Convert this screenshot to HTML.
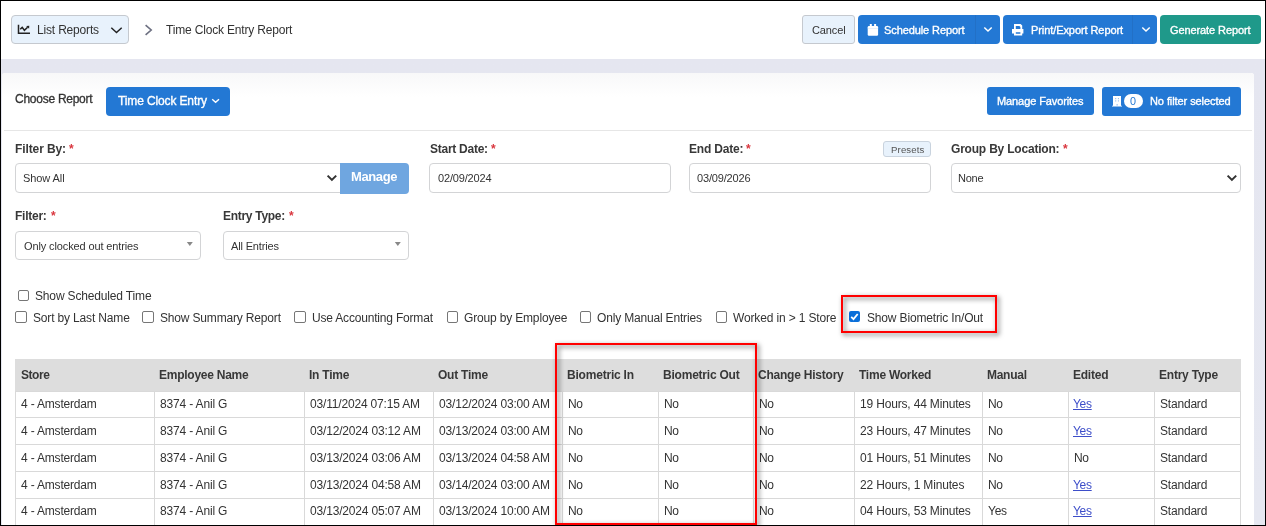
<!DOCTYPE html>
<html><head><meta charset="utf-8"><title>Time Clock Entry Report</title>
<style>
html,body{margin:0;padding:0;width:1266px;height:526px;overflow:hidden;background:#fff}
body{position:relative;font-family:"Liberation Sans",sans-serif}
.t{position:absolute;line-height:1;white-space:pre;font-family:"Liberation Sans",sans-serif;will-change:transform}
</style></head><body>
<div style="position:absolute;left:0px;top:0px;width:1266px;height:59px;background:#fff"></div>
<div style="position:absolute;left:0px;top:59px;width:1266px;height:467px;background:linear-gradient(#e5e6f0,#e6e8f1)"></div>
<div style="position:absolute;left:2px;top:73px;width:1252px;height:453px;background:#fff;border-radius:3px 3px 0 0"></div>
<div style="position:absolute;left:2px;top:73px;width:1252px;height:24px;background:linear-gradient(#f8f8f9,#fff);border-radius:3px 3px 0 0"></div>
<div style="position:absolute;left:4px;top:130px;width:1248px;height:1px;background:#e6e6e6"></div>
<div style="position:absolute;left:11px;top:15px;width:118px;height:29px;box-sizing:border-box;background:#e8f2fc;border:1px solid #c5c9cf;border-radius:4px"></div>
<svg style="position:absolute;left:17px;top:24px;" width="14" height="11" viewBox="0 0 14 11"><path d="M1.5 0.8 V9.3 H13" stroke="#222" stroke-width="1.5" fill="none"/><path d="M3.2 5.3 L5.2 3.4 L7.4 6.3 L10.6 3.2" stroke="#222" stroke-width="1.5" fill="none"/><path d="M9.2 1.9 L12.3 1.7 L12.1 4.8 Z" fill="#222"/></svg>
<div class="t" style="left:37.0px;top:23.64px;font-size:12px;color:#333;font-weight:400;letter-spacing:-0.176px;">List Reports</div>
<svg style="position:absolute;left:110px;top:26px;" width="13" height="8" viewBox="0 0 13 8"><path d="M1.3 1.8 L6.5 6.5 L11.7 1.8" stroke="#222" stroke-width="1.5" fill="none"/></svg>
<svg style="position:absolute;left:144px;top:24px;" width="9" height="12" viewBox="0 0 9 12"><path d="M1.6 1.2 L7.2 6 L1.6 10.8" stroke="#6c6f80" stroke-width="1.6" fill="none"/></svg>
<div class="t" style="left:166.2px;top:23.84px;font-size:12px;color:#333;font-weight:400;letter-spacing:-0.176px;">Time Clock Entry Report</div>
<div style="position:absolute;left:802px;top:15px;width:53px;height:29px;box-sizing:border-box;background:#e8f2fc;border:1px solid #c5c9cf;border-radius:3px"></div>
<div class="t" style="left:811.6px;top:24.69px;font-size:11px;color:#333;font-weight:400;letter-spacing:-0.130px;">Cancel</div>
<div style="position:absolute;left:858px;top:15px;width:142px;height:29px;background:#2378d4;border-radius:4px"></div>
<div style="position:absolute;left:975px;top:15px;width:1px;height:29px;background:#2270c6"></div>
<svg style="position:absolute;left:867px;top:23px;" width="12" height="13" viewBox="0 0 12 13"><rect x="0.7" y="3" width="10.4" height="9.8" rx="1.2" fill="#fff"/><rect x="2.8" y="1" width="2" height="3" fill="#fff"/><rect x="7.1" y="1" width="2" height="3" fill="#fff"/><rect x="0.7" y="5.2" width="10.4" height="0.5" fill="#cfe0f5"/></svg>
<div class="t" style="left:884.3000000000001px;top:24.69px;font-size:11px;color:#fff;font-weight:400;-webkit-text-stroke:0.35px #fff;letter-spacing:-0.097px;">Schedule Report</div>
<svg style="position:absolute;left:983px;top:26px;" width="10" height="7" viewBox="0 0 10 7"><path d="M1.3 1.5 L5 5 L8.7 1.5" stroke="#fff" stroke-width="1.5" fill="none"/></svg>
<div style="position:absolute;left:1003px;top:15px;width:154px;height:29px;background:#2378d4;border-radius:4px"></div>
<div style="position:absolute;left:1132px;top:15px;width:1px;height:29px;background:#2270c6"></div>
<svg style="position:absolute;left:1012px;top:24px;" width="12" height="12" viewBox="0 0 12 12"><path fill-rule="evenodd" fill="#fff" d="M2 0 H8.6 L10.2 1.6 V5 H11.4 V9.4 H10.2 V11.6 H2 V9.4 H0 V5 H2 Z M3.8 2 V4.9 H8.4 V3 L7.4 2 Z M3.8 8.2 V9.8 H8.4 V8.2 Z"/></svg>
<div class="t" style="left:1030.6px;top:24.69px;font-size:11px;color:#fff;font-weight:400;-webkit-text-stroke:0.35px #fff;letter-spacing:-0.080px;">Print/Export Report</div>
<svg style="position:absolute;left:1141px;top:26px;" width="10" height="7" viewBox="0 0 10 7"><path d="M1.3 1.5 L5 5 L8.7 1.5" stroke="#fff" stroke-width="1.5" fill="none"/></svg>
<div style="position:absolute;left:1160px;top:15px;width:101px;height:29px;background:#1f998a;border-radius:4px"></div>
<div class="t" style="left:1170.3px;top:24.69px;font-size:11px;color:#fff;font-weight:400;-webkit-text-stroke:0.35px #fff;letter-spacing:-0.096px;">Generate Report</div>
<div class="t" style="left:15.1px;top:93.24px;font-size:12px;color:#333;font-weight:400;-webkit-text-stroke:0.3px #333;letter-spacing:-0.260px;">Choose Report</div>
<div style="position:absolute;left:106px;top:87px;width:124px;height:29px;background:#2378d4;border-radius:4px"></div>
<div class="t" style="left:117.89999999999999px;top:94.84px;font-size:12px;color:#fff;font-weight:400;-webkit-text-stroke:0.35px #fff;letter-spacing:-0.127px;">Time Clock Entry</div>
<svg style="position:absolute;left:211px;top:98px;" width="10" height="6" viewBox="0 0 10 6"><path d="M1.2 1.2 L4.6 4.3 L8 1.2" stroke="#fff" stroke-width="1.4" fill="none"/></svg>
<div style="position:absolute;left:987px;top:87px;width:107px;height:28px;background:#2378d4;border-radius:3px"></div>
<div class="t" style="left:996.5px;top:96.09px;font-size:11px;color:#fff;font-weight:400;-webkit-text-stroke:0.35px #fff;letter-spacing:-0.096px;">Manage Favorites</div>
<div style="position:absolute;left:1102px;top:87px;width:139px;height:29px;background:#2378d4;border-radius:3px"></div>
<svg style="position:absolute;left:1112px;top:96px;" width="10" height="11" viewBox="0 0 10 11"><path fill="#fff" d="M1 0 H9 V9.8 H10 V10.6 H0 V9.8 H1 Z"/><g fill="#8fb8ea"><rect x="3.2" y="2" width="1" height="1.2"/><rect x="5.9" y="2" width="1" height="1.2"/><rect x="3.2" y="4.3" width="1" height="1.2"/><rect x="5.9" y="4.3" width="1" height="1.2"/><rect x="4.6" y="8" width="1" height="1.6"/></g></svg>
<div style="position:absolute;left:1124px;top:94px;width:19px;height:14px;background:#fff;border-radius:7px"></div>
<div class="t" style="left:1130.3999999999999px;top:95.76px;font-size:10.8px;color:#2378d4;font-weight:400;letter-spacing:-0.180px;">0</div>
<div class="t" style="left:1149.6999999999998px;top:95.69px;font-size:11px;color:#fff;font-weight:400;-webkit-text-stroke:0.35px #fff;letter-spacing:-0.079px;">No filter selected</div>
<div class="t" style="left:15.0px;top:142.74px;font-size:12px;color:#383838;font-weight:700;letter-spacing:-0.102px;">Filter By:</div>
<div class="t" style="left:68.89999999999999px;top:142.74px;font-size:12px;color:#d9363e;font-weight:700;letter-spacing:-0.140px;">*</div>
<div style="position:absolute;left:15px;top:163px;width:326px;height:30px;box-sizing:border-box;border:1px solid #d3d4d6;border-radius:4px 0 0 4px;background:#fff"></div>
<div class="t" style="left:22.900000000000002px;top:172.69px;font-size:11px;color:#333;font-weight:400;letter-spacing:-0.086px;">Show All</div>
<svg style="position:absolute;left:326px;top:174px;" width="12" height="8" viewBox="0 0 12 8"><path d="M1.6 1.6 L5.9 5.9 L10.2 1.6" stroke="#333" stroke-width="2" fill="none"/></svg>
<div style="position:absolute;left:340px;top:163px;width:69px;height:31px;background:#6fa6e0;border-radius:0 4px 4px 0"></div>
<div class="t" style="left:350.8px;top:170.20px;font-size:13px;color:#fff;font-weight:700;letter-spacing:-0.401px;">Manage</div>
<div class="t" style="left:429.6px;top:142.74px;font-size:12px;color:#383838;font-weight:700;letter-spacing:-0.259px;">Start Date:</div>
<div class="t" style="left:491.0px;top:142.74px;font-size:12px;color:#d9363e;font-weight:700;letter-spacing:-0.140px;">*</div>
<div style="position:absolute;left:429px;top:163px;width:242px;height:30px;box-sizing:border-box;border:1px solid #d3d4d6;border-radius:4px;background:#fff"></div>
<div class="t" style="left:437.5px;top:172.99px;font-size:11px;color:#333;font-weight:400;letter-spacing:-0.162px;">02/09/2024</div>
<div class="t" style="left:688.7px;top:142.74px;font-size:12px;color:#383838;font-weight:700;letter-spacing:-0.202px;">End Date:</div>
<div class="t" style="left:745.7px;top:142.74px;font-size:12px;color:#d9363e;font-weight:700;letter-spacing:-0.140px;">*</div>
<div style="position:absolute;left:883px;top:141px;width:48px;height:16px;box-sizing:border-box;background:#e8f2fc;border:1px solid #c9d3de;border-radius:3px"></div>
<div class="t" style="left:890.5px;top:145.27px;font-size:9.6px;color:#555;font-weight:400;letter-spacing:0.145px;">Presets</div>
<div style="position:absolute;left:689px;top:163px;width:242px;height:30px;box-sizing:border-box;border:1px solid #d3d4d6;border-radius:4px;background:#fff"></div>
<div class="t" style="left:697.4px;top:172.99px;font-size:11px;color:#333;font-weight:400;letter-spacing:-0.162px;">03/09/2026</div>
<div class="t" style="left:951.4px;top:142.64px;font-size:12px;color:#383838;font-weight:700;letter-spacing:-0.200px;">Group By Location:</div>
<div class="t" style="left:1063.0px;top:142.64px;font-size:12px;color:#d9363e;font-weight:700;letter-spacing:-0.140px;">*</div>
<div style="position:absolute;left:951px;top:163px;width:290px;height:30px;box-sizing:border-box;border:1px solid #d3d4d6;border-radius:4px;background:#fff"></div>
<div class="t" style="left:958.2px;top:172.69px;font-size:11px;color:#333;font-weight:400;letter-spacing:-0.263px;">None</div>
<svg style="position:absolute;left:1226px;top:174px;" width="12" height="8" viewBox="0 0 12 8"><path d="M1.6 1.6 L5.9 5.9 L10.2 1.6" stroke="#333" stroke-width="2" fill="none"/></svg>
<div class="t" style="left:15.4px;top:209.74px;font-size:12px;color:#383838;font-weight:700;letter-spacing:-0.245px;">Filter:</div>
<div class="t" style="left:51.1px;top:209.74px;font-size:12px;color:#d9363e;font-weight:700;letter-spacing:-0.140px;">*</div>
<div style="position:absolute;left:15px;top:231px;width:186px;height:29px;box-sizing:border-box;border:1px solid #d3d4d6;border-radius:4px;background:#fff"></div>
<div class="t" style="left:23.700000000000003px;top:241.19px;font-size:11px;color:#333;font-weight:400;letter-spacing:-0.121px;">Only clocked out entries</div>
<svg style="position:absolute;left:186px;top:241px;" width="8" height="6" viewBox="0 0 8 6"><path d="M0.8 0.9 H6.8 L3.8 4.9 Z" fill="#888"/></svg>
<div class="t" style="left:223.2px;top:209.74px;font-size:12px;color:#383838;font-weight:700;letter-spacing:-0.287px;">Entry Type:</div>
<div class="t" style="left:289.20000000000005px;top:209.74px;font-size:12px;color:#d9363e;font-weight:700;letter-spacing:-0.140px;">*</div>
<div style="position:absolute;left:223px;top:231px;width:186px;height:29px;box-sizing:border-box;border:1px solid #d3d4d6;border-radius:4px;background:#fff"></div>
<div class="t" style="left:231.2px;top:241.19px;font-size:11px;color:#333;font-weight:400;letter-spacing:-0.149px;">All Entries</div>
<svg style="position:absolute;left:394px;top:241px;" width="8" height="6" viewBox="0 0 8 6"><path d="M0.8 0.9 H6.8 L3.8 4.9 Z" fill="#888"/></svg>
<div style="position:absolute;left:18px;top:289.5px;width:11px;height:11px;box-sizing:border-box;border:1.3px solid #767676;border-radius:2px;background:#fff"></div>
<div class="t" style="left:34.9px;top:289.84px;font-size:12px;color:#333;font-weight:400;letter-spacing:-0.156px;">Show Scheduled Time</div>
<div style="position:absolute;left:15.3px;top:311.2px;width:11.5px;height:11.5px;box-sizing:border-box;border:1.3px solid #767676;border-radius:2px;background:#fff"></div>
<div class="t" style="left:32.800000000000004px;top:311.54px;font-size:12px;color:#333;font-weight:400;letter-spacing:-0.161px;">Sort by Last Name</div>
<div style="position:absolute;left:142.3px;top:311.2px;width:11.5px;height:11.5px;box-sizing:border-box;border:1.3px solid #767676;border-radius:2px;background:#fff"></div>
<div class="t" style="left:160.4px;top:311.54px;font-size:12px;color:#333;font-weight:400;letter-spacing:-0.169px;">Show Summary Report</div>
<div style="position:absolute;left:294.2px;top:311.2px;width:11.5px;height:11.5px;box-sizing:border-box;border:1.3px solid #767676;border-radius:2px;background:#fff"></div>
<div class="t" style="left:312.1px;top:311.54px;font-size:12px;color:#333;font-weight:400;letter-spacing:-0.187px;">Use Accounting Format</div>
<div style="position:absolute;left:446.6px;top:311.2px;width:11.5px;height:11.5px;box-sizing:border-box;border:1.3px solid #767676;border-radius:2px;background:#fff"></div>
<div class="t" style="left:463.8px;top:311.54px;font-size:12px;color:#333;font-weight:400;letter-spacing:-0.166px;">Group by Employee</div>
<div style="position:absolute;left:579.5px;top:311.2px;width:11.5px;height:11.5px;box-sizing:border-box;border:1.3px solid #767676;border-radius:2px;background:#fff"></div>
<div class="t" style="left:597.3000000000001px;top:311.54px;font-size:12px;color:#333;font-weight:400;letter-spacing:-0.175px;">Only Manual Entries</div>
<div style="position:absolute;left:715.5px;top:311.2px;width:11.5px;height:11.5px;box-sizing:border-box;border:1.3px solid #767676;border-radius:2px;background:#fff"></div>
<div class="t" style="left:732.9px;top:311.54px;font-size:12px;color:#333;font-weight:400;letter-spacing:-0.148px;">Worked in &gt; 1 Store</div>
<div style="position:absolute;left:849px;top:311px;width:11px;height:11px;background:#0b6fd9;border-radius:2px"></div>
<svg style="position:absolute;left:849px;top:311px;" width="11" height="11" viewBox="0 0 11 11"><path d="M2.2 5.9 L4.5 8.1 L8.7 3" stroke="#fff" stroke-width="1.8" fill="none"/></svg>
<div class="t" style="left:866.9px;top:311.54px;font-size:12px;color:#333;font-weight:400;letter-spacing:-0.160px;">Show Biometric In/Out</div>
<div style="position:absolute;left:15px;top:359px;width:1226px;height:32px;background:#dddddd"></div>
<div style="position:absolute;left:15px;top:391px;width:1226px;height:1px;background:#d9d9d9"></div>
<div style="position:absolute;left:15px;top:417px;width:1226px;height:1px;background:#d9d9d9"></div>
<div style="position:absolute;left:15px;top:444px;width:1226px;height:1px;background:#d9d9d9"></div>
<div style="position:absolute;left:15px;top:471px;width:1226px;height:1px;background:#d9d9d9"></div>
<div style="position:absolute;left:15px;top:498px;width:1226px;height:1px;background:#d9d9d9"></div>
<div style="position:absolute;left:15px;top:391px;width:1px;height:135px;background:#d9d9d9"></div>
<div style="position:absolute;left:154px;top:391px;width:1px;height:135px;background:#d9d9d9"></div>
<div style="position:absolute;left:304px;top:391px;width:1px;height:135px;background:#d9d9d9"></div>
<div style="position:absolute;left:433px;top:391px;width:1px;height:135px;background:#d9d9d9"></div>
<div style="position:absolute;left:562px;top:391px;width:1px;height:135px;background:#d9d9d9"></div>
<div style="position:absolute;left:658px;top:391px;width:1px;height:135px;background:#d9d9d9"></div>
<div style="position:absolute;left:753px;top:391px;width:1px;height:135px;background:#d9d9d9"></div>
<div style="position:absolute;left:854px;top:391px;width:1px;height:135px;background:#d9d9d9"></div>
<div style="position:absolute;left:982px;top:391px;width:1px;height:135px;background:#d9d9d9"></div>
<div style="position:absolute;left:1068px;top:391px;width:1px;height:135px;background:#d9d9d9"></div>
<div style="position:absolute;left:1154px;top:391px;width:1px;height:135px;background:#d9d9d9"></div>
<div style="position:absolute;left:1240px;top:391px;width:1px;height:135px;background:#d9d9d9"></div>
<div class="t" style="left:20.6px;top:368.64px;font-size:12px;color:#383838;font-weight:700;letter-spacing:-0.460px;">Store</div>
<div class="t" style="left:159.0px;top:368.64px;font-size:12px;color:#383838;font-weight:700;letter-spacing:-0.255px;">Employee Name</div>
<div class="t" style="left:309.0px;top:368.64px;font-size:12px;color:#383838;font-weight:700;letter-spacing:-0.230px;">In Time</div>
<div class="t" style="left:438.0px;top:368.64px;font-size:12px;color:#383838;font-weight:700;letter-spacing:-0.244px;">Out Time</div>
<div class="t" style="left:567.0px;top:368.64px;font-size:12px;color:#383838;font-weight:700;letter-spacing:-0.208px;">Biometric In</div>
<div class="t" style="left:663.0px;top:368.64px;font-size:12px;color:#383838;font-weight:700;letter-spacing:-0.218px;">Biometric Out</div>
<div class="t" style="left:758.0px;top:368.64px;font-size:12px;color:#383838;font-weight:700;letter-spacing:-0.225px;">Change History</div>
<div class="t" style="left:859.0px;top:368.64px;font-size:12px;color:#383838;font-weight:700;letter-spacing:-0.247px;">Time Worked</div>
<div class="t" style="left:987.0px;top:368.64px;font-size:12px;color:#383838;font-weight:700;letter-spacing:-0.273px;">Manual</div>
<div class="t" style="left:1073.0px;top:368.64px;font-size:12px;color:#383838;font-weight:700;letter-spacing:-0.242px;">Edited</div>
<div class="t" style="left:1159.0px;top:368.64px;font-size:12px;color:#383838;font-weight:700;letter-spacing:-0.224px;">Entry Type</div>
<div class="t" style="left:20.700000000000003px;top:397.94px;font-size:12px;color:#333;font-weight:400;letter-spacing:-0.182px;">4 - Amsterdam</div>
<div class="t" style="left:159.7px;top:397.94px;font-size:12px;color:#333;font-weight:400;letter-spacing:-0.162px;">8374 - Anil G</div>
<div class="t" style="left:309.70000000000005px;top:397.94px;font-size:12px;color:#333;font-weight:400;letter-spacing:-0.176px;">03/11/2024 07:15 AM</div>
<div class="t" style="left:438.70000000000005px;top:397.94px;font-size:12px;color:#333;font-weight:400;letter-spacing:-0.177px;">03/12/2024 03:00 AM</div>
<div class="t" style="left:567.7px;top:397.94px;font-size:12px;color:#333;font-weight:400;letter-spacing:-0.430px;">No</div>
<div class="t" style="left:663.7px;top:397.94px;font-size:12px;color:#333;font-weight:400;letter-spacing:-0.430px;">No</div>
<div class="t" style="left:758.7px;top:397.94px;font-size:12px;color:#333;font-weight:400;letter-spacing:-0.430px;">No</div>
<div class="t" style="left:859.7px;top:397.94px;font-size:12px;color:#333;font-weight:400;letter-spacing:-0.168px;">19 Hours, 44 Minutes</div>
<div class="t" style="left:987.7px;top:397.94px;font-size:12px;color:#333;font-weight:400;letter-spacing:-0.430px;">No</div>
<div class="t" style="left:1073.1999999999998px;top:397.94px;font-size:12px;color:#3d4ec9;font-weight:400;text-decoration:underline;letter-spacing:-0.294px;">Yes</div>
<div class="t" style="left:1159.6999999999998px;top:397.94px;font-size:12px;color:#333;font-weight:400;letter-spacing:-0.195px;">Standard</div>
<div class="t" style="left:20.700000000000003px;top:424.74px;font-size:12px;color:#333;font-weight:400;letter-spacing:-0.182px;">4 - Amsterdam</div>
<div class="t" style="left:159.7px;top:424.74px;font-size:12px;color:#333;font-weight:400;letter-spacing:-0.162px;">8374 - Anil G</div>
<div class="t" style="left:309.70000000000005px;top:424.74px;font-size:12px;color:#333;font-weight:400;letter-spacing:-0.177px;">03/12/2024 03:12 AM</div>
<div class="t" style="left:438.70000000000005px;top:424.74px;font-size:12px;color:#333;font-weight:400;letter-spacing:-0.177px;">03/13/2024 03:00 AM</div>
<div class="t" style="left:567.7px;top:424.74px;font-size:12px;color:#333;font-weight:400;letter-spacing:-0.430px;">No</div>
<div class="t" style="left:663.7px;top:424.74px;font-size:12px;color:#333;font-weight:400;letter-spacing:-0.430px;">No</div>
<div class="t" style="left:758.7px;top:424.74px;font-size:12px;color:#333;font-weight:400;letter-spacing:-0.430px;">No</div>
<div class="t" style="left:859.7px;top:424.74px;font-size:12px;color:#333;font-weight:400;letter-spacing:-0.168px;">23 Hours, 47 Minutes</div>
<div class="t" style="left:987.7px;top:424.74px;font-size:12px;color:#333;font-weight:400;letter-spacing:-0.430px;">No</div>
<div class="t" style="left:1073.1999999999998px;top:424.74px;font-size:12px;color:#3d4ec9;font-weight:400;text-decoration:underline;letter-spacing:-0.294px;">Yes</div>
<div class="t" style="left:1159.6999999999998px;top:424.74px;font-size:12px;color:#333;font-weight:400;letter-spacing:-0.195px;">Standard</div>
<div class="t" style="left:20.700000000000003px;top:451.74px;font-size:12px;color:#333;font-weight:400;letter-spacing:-0.182px;">4 - Amsterdam</div>
<div class="t" style="left:159.7px;top:451.74px;font-size:12px;color:#333;font-weight:400;letter-spacing:-0.162px;">8374 - Anil G</div>
<div class="t" style="left:309.70000000000005px;top:451.74px;font-size:12px;color:#333;font-weight:400;letter-spacing:-0.177px;">03/13/2024 03:06 AM</div>
<div class="t" style="left:438.70000000000005px;top:451.74px;font-size:12px;color:#333;font-weight:400;letter-spacing:-0.177px;">03/13/2024 04:58 AM</div>
<div class="t" style="left:567.7px;top:451.74px;font-size:12px;color:#333;font-weight:400;letter-spacing:-0.430px;">No</div>
<div class="t" style="left:663.7px;top:451.74px;font-size:12px;color:#333;font-weight:400;letter-spacing:-0.430px;">No</div>
<div class="t" style="left:758.7px;top:451.74px;font-size:12px;color:#333;font-weight:400;letter-spacing:-0.430px;">No</div>
<div class="t" style="left:859.7px;top:451.74px;font-size:12px;color:#333;font-weight:400;letter-spacing:-0.168px;">01 Hours, 51 Minutes</div>
<div class="t" style="left:987.7px;top:451.74px;font-size:12px;color:#333;font-weight:400;letter-spacing:-0.430px;">No</div>
<div class="t" style="left:1073.6999999999998px;top:451.74px;font-size:12px;color:#333;font-weight:400;letter-spacing:-0.430px;">No</div>
<div class="t" style="left:1159.6999999999998px;top:451.74px;font-size:12px;color:#333;font-weight:400;letter-spacing:-0.195px;">Standard</div>
<div class="t" style="left:20.700000000000003px;top:478.54px;font-size:12px;color:#333;font-weight:400;letter-spacing:-0.182px;">4 - Amsterdam</div>
<div class="t" style="left:159.7px;top:478.54px;font-size:12px;color:#333;font-weight:400;letter-spacing:-0.162px;">8374 - Anil G</div>
<div class="t" style="left:309.70000000000005px;top:478.54px;font-size:12px;color:#333;font-weight:400;letter-spacing:-0.177px;">03/13/2024 04:58 AM</div>
<div class="t" style="left:438.70000000000005px;top:478.54px;font-size:12px;color:#333;font-weight:400;letter-spacing:-0.177px;">03/14/2024 03:00 AM</div>
<div class="t" style="left:567.7px;top:478.54px;font-size:12px;color:#333;font-weight:400;letter-spacing:-0.430px;">No</div>
<div class="t" style="left:663.7px;top:478.54px;font-size:12px;color:#333;font-weight:400;letter-spacing:-0.430px;">No</div>
<div class="t" style="left:758.7px;top:478.54px;font-size:12px;color:#333;font-weight:400;letter-spacing:-0.430px;">No</div>
<div class="t" style="left:859.7px;top:478.54px;font-size:12px;color:#333;font-weight:400;letter-spacing:-0.167px;">22 Hours, 1 Minutes</div>
<div class="t" style="left:987.7px;top:478.54px;font-size:12px;color:#333;font-weight:400;letter-spacing:-0.430px;">No</div>
<div class="t" style="left:1073.1999999999998px;top:478.54px;font-size:12px;color:#3d4ec9;font-weight:400;text-decoration:underline;letter-spacing:-0.294px;">Yes</div>
<div class="t" style="left:1159.6999999999998px;top:478.54px;font-size:12px;color:#333;font-weight:400;letter-spacing:-0.195px;">Standard</div>
<div class="t" style="left:20.700000000000003px;top:504.94px;font-size:12px;color:#333;font-weight:400;letter-spacing:-0.182px;">4 - Amsterdam</div>
<div class="t" style="left:159.7px;top:504.94px;font-size:12px;color:#333;font-weight:400;letter-spacing:-0.162px;">8374 - Anil G</div>
<div class="t" style="left:309.70000000000005px;top:504.94px;font-size:12px;color:#333;font-weight:400;letter-spacing:-0.177px;">03/13/2024 05:07 AM</div>
<div class="t" style="left:438.70000000000005px;top:504.94px;font-size:12px;color:#333;font-weight:400;letter-spacing:-0.177px;">03/13/2024 10:00 AM</div>
<div class="t" style="left:567.7px;top:504.94px;font-size:12px;color:#333;font-weight:400;letter-spacing:-0.430px;">No</div>
<div class="t" style="left:663.7px;top:504.94px;font-size:12px;color:#333;font-weight:400;letter-spacing:-0.430px;">No</div>
<div class="t" style="left:758.7px;top:504.94px;font-size:12px;color:#333;font-weight:400;letter-spacing:-0.430px;">No</div>
<div class="t" style="left:859.7px;top:504.94px;font-size:12px;color:#333;font-weight:400;letter-spacing:-0.168px;">04 Hours, 53 Minutes</div>
<div class="t" style="left:987.7px;top:504.94px;font-size:12px;color:#333;font-weight:400;letter-spacing:-0.274px;">Yes</div>
<div class="t" style="left:1073.1999999999998px;top:504.94px;font-size:12px;color:#3d4ec9;font-weight:400;text-decoration:underline;letter-spacing:-0.294px;">Yes</div>
<div class="t" style="left:1159.6999999999998px;top:504.94px;font-size:12px;color:#333;font-weight:400;letter-spacing:-0.195px;">Standard</div>
<div style="position:absolute;left:841px;top:295px;width:156px;height:38px;box-sizing:border-box;border:2px solid #ff0000;filter:drop-shadow(2px 2px 2.5px rgba(0,0,0,.6))"></div>
<div style="position:absolute;left:555px;top:343px;width:202px;height:182px;box-sizing:border-box;border:2px solid #ff0000;filter:drop-shadow(2px 2px 2.5px rgba(0,0,0,.6))"></div>
<div style="position:absolute;left:0px;top:0px;width:1266px;height:1px;background:#000"></div>
<div style="position:absolute;left:0px;top:525px;width:1266px;height:1px;background:#000"></div>
<div style="position:absolute;left:0px;top:0px;width:1px;height:526px;background:#000"></div>
<div style="position:absolute;left:1265px;top:0px;width:1px;height:526px;background:#000"></div>
</body></html>
